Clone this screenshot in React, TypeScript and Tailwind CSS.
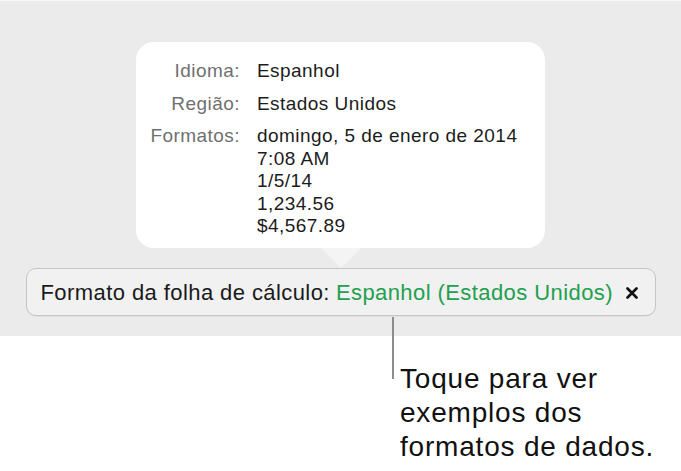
import React from "react";

const font = { fontFamily: '"Liberation Sans", Arial, sans-serif' };

export default function App() {
  return (
    <div className="relative w-[681px] h-[471px] bg-white overflow-hidden" style={font}>
      <div className="flex flex-col items-center h-[336px] bg-[#ebebeb] border-t border-[#f7f7f7] pt-[41px]">
        <div className="w-[409px] bg-white rounded-[18px] pt-[18px] pb-[10.5px] grid grid-cols-[104px_1fr] gap-x-[17px] gap-y-[10px] text-[19px] leading-[22.5px] tracking-[0.45px]">
          <div className="text-right text-[#707070]">Idioma:</div>
          <div className="text-[#1c1c1c]">Espanhol</div>
          <div className="text-right text-[#707070]">Região:</div>
          <div className="text-[#1c1c1c]">Estados Unidos</div>
          <div className="text-right text-[#707070]">Formatos:</div>
          <div className="flex flex-col text-[#1c1c1c]">
            <span>domingo, 5 de enero de 2014</span>
            <span>7:08 AM</span>
            <span>1/5/14</span>
            <span>1,234.56</span>
            <span>$4,567.89</span>
          </div>
        </div>
        <svg width="40" height="20" viewBox="0 0 40 20" className="block -mr-[1px]">
          <path d="M0 0 L40 0 L21 19.5 Q20 20.5 19 19.5 Z" fill="#f4f4f4" />
        </svg>
        <div className="w-[630px] h-[48px] rounded-[10px] border border-[#c6c6c6] bg-[#f1f1f1] flex items-center pl-[14px] pr-[17px] pt-[2px] text-[22px] leading-[26px] tracking-[0.42px] shadow-[0_1px_0_rgba(0,0,0,0.04)]">
          <span className="text-[#1a1a1a]">Formato da folha de cálculo:</span>
          <span className="ml-[6px] text-[#22a04e]">Espanhol (Estados Unidos)</span>
          <span className="ml-auto flex items-center">
            <svg width="12" height="12" viewBox="0 0 12 12">
              <path d="M1.5 1.5 L10.5 10.5 M10.5 1.5 L1.5 10.5" stroke="#111" strokeWidth="2.6" strokeLinecap="round" />
            </svg>
          </span>
        </div>
      </div>
      <div className="absolute left-[392px] top-[317px] w-[2px] h-[62px] bg-[#8c8c8c]" />
      <div className="pl-[400px] pt-[26px] text-[28px] leading-[34px] tracking-[0.8px] text-[#111]">
        <div>Toque para ver</div>
        <div>exemplos dos</div>
        <div>formatos de dados.</div>
      </div>
    </div>
  );
}
